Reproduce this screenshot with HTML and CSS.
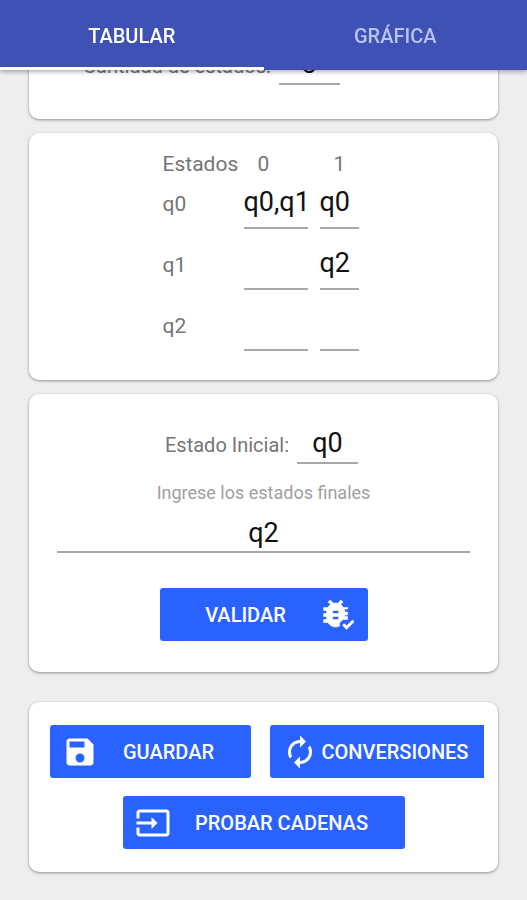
FILE: index.html
```html
<!DOCTYPE html>
<html lang="es">
<head>
    <meta charset="UTF-8">
    <meta name="viewport" content="width=device-width, initial-scale=1.0">
    <title>Tabular</title>
    <link rel="stylesheet" href="styles.css">
</head>
<body>

    <header class="tabs">
        <button type="button" class="tab active">TABULAR</button>
        <button type="button" class="tab">GRÁFICA</button>
    </header>

    <main>
        <section class="card card-count">
            <div class="field-row">
                <label for="cantidad">Cantidad de estados:</label>
                <input type="text" id="cantidad" class="field short" value="3">
            </div>
        </section>

        <section class="card card-table">
            <table class="states">
                <thead>
                    <tr>
                        <th class="col-name">Estados</th>
                        <th class="col-wide symbol">0</th>
                        <th class="col-narrow symbol">1</th>
                    </tr>
                </thead>
                <tbody>
                    <tr>
                        <td>q0</td>
                        <td><input type="text" class="field cell" aria-label="q0 con 0" value="q0,q1"></td>
                        <td><input type="text" class="field cell" aria-label="q0 con 1" value="q0"></td>
                    </tr>
                    <tr>
                        <td>q1</td>
                        <td><input type="text" class="field cell" aria-label="q1 con 0"></td>
                        <td><input type="text" class="field cell" aria-label="q1 con 1" value="q2"></td>
                    </tr>
                    <tr>
                        <td>q2</td>
                        <td><input type="text" class="field cell" aria-label="q2 con 0"></td>
                        <td><input type="text" class="field cell" aria-label="q2 con 1"></td>
                    </tr>
                </tbody>
            </table>
        </section>

        <section class="card card-final">
            <div class="field-row">
                <label for="inicial">Estado Inicial:</label>
                <input type="text" id="inicial" class="field short" value="q0">
            </div>
            <label for="finales" class="hint">Ingrese los estados finales</label>
            <input type="text" id="finales" class="field full" value="q2">
            <button type="button" class="btn btn-validate">
                <span>VALIDAR</span>
                <svg class="icon" viewBox="0 0 24 24">
                    <path class="bug" transform="translate(-1.6 -1)" d="M20 8h-2.81c-.45-.78-1.07-1.45-1.82-1.96L17 4.41 15.59 3l-2.17 2.17C12.96 5.06 12.49 5 12 5s-.96.06-1.41.17L8.41 3 7 4.41l1.62 1.63C7.88 6.55 7.26 7.22 6.81 8H4v2h2.09c-.05.33-.09.66-.09 1v1H4v2h2v1c0 .34.04.67.09 1H4v2h2.81c1.04 1.79 2.97 3 5.19 3 .9 0 1.8-.2 2.5-.6v-2l2.5-2.4h3v-2h-2v-1h2v-2h-2v-1c0-.34-.04-.67-.09-1H20V8zm-6 8h-4v-2h4v2zm0-4h-4v-2h4v2z"/>
                    <path class="check" d="M15.5 18.2l2.2 2.2 4.6-4.6"/>
                </svg>
            </button>
        </section>

        <section class="card card-actions">
            <div class="btn-row">
                <button type="button" class="btn btn-save">
                    <svg class="icon" viewBox="0 0 24 24">
                        <path d="M17 3H5c-1.11 0-2 .9-2 2v14c0 1.1.89 2 2 2h14c1.1 0 2-.9 2-2V7l-4-4zm-5 16c-1.66 0-3-1.34-3-3s1.34-3 3-3 3 1.34 3 3-1.34 3-3 3zm3-10H5V5h10v4z"/>
                    </svg>
                    <span>GUARDAR</span>
                </button>
                <button type="button" class="btn btn-convert">
                    <svg class="icon" viewBox="0 0 24 24">
                        <path d="M12 6v3l4-4-4-4v3c-4.42 0-8 3.58-8 8 0 1.57.46 3.03 1.24 4.26L6.7 14.8c-.45-.83-.7-1.79-.7-2.8 0-3.31 2.69-6 6-6zm6.76 1.74L17.3 9.2c.44.84.7 1.79.7 2.8 0 3.31-2.69 6-6 6v-3l-4 4 4 4v-3c4.42 0 8-3.58 8-8 0-1.57-.46-3.03-1.24-4.26z"/>
                    </svg>
                    <span>CONVERSIONES</span>
                </button>
            </div>
            <button type="button" class="btn btn-test">
                <svg class="icon" viewBox="0 0 24 24">
                    <path d="M21 3.01H3c-1.1 0-2 .9-2 2V9h2V4.99h18v14.03H3V15H1v4.01c0 1.1.9 1.98 2 1.98h18c1.1 0 2-.88 2-1.98v-14c0-1.11-.9-2-2-2zM11 16l4-4-4-4v3H1v2h10v3z"/>
                </svg>
                <span>PROBAR CADENAS</span>
            </button>
        </section>
    </main>

</body>
</html>
```

FILE: styles.css
```css
* {
    box-sizing: border-box;
}

body {
    margin: 0;
    background-color: #eeeeee;
    color: #757575;
    font-family: Roboto, sans-serif;
    font-size: 20px;
}

button, input {
    font-family: inherit;
    border: none;
}

.tabs {
    position: fixed;
    top: 0;
    left: 0;
    right: 0;
    z-index: 1;
    display: flex;
    height: 70px;
    background-color: #3f51b5;
    box-shadow: 0 2px 4px rgba(0, 0, 0, 0.3);
}

.tab {
    flex: 1;
    padding: 4px 0 0;
    background: none;
    border-bottom: 3px solid transparent;
    color: #b9c3f0;
    font-size: 20px;
    font-weight: 500;
}

.tab.active {
    color: white;
    border-bottom-color: white;
}

main {
    display: flex;
    flex-direction: column;
    gap: 14px;
    padding: 20px 29px 28px;
}

.card {
    display: flex;
    flex-direction: column;
    align-items: center;
    background-color: white;
    border-radius: 10px;
    box-shadow: 0 1px 3px rgba(0, 0, 0, 0.4);
}

.card-count {
    align-items: flex-start;
    padding: 27px 54px 34px;
}

.card-table {
    padding: 17px 0 19px;
}

.card-final {
    padding: 32px 28px 31px;
}

.card-actions {
    margin-top: 16px;
    padding: 23px 0;
    gap: 18px;
}

.field-row {
    display: flex;
    align-items: baseline;
    gap: 8px;
    padding-right: 4px;
}

.field {
    padding: 0;
    background: none;
    border-bottom: 2px solid #a8a8a8;
    border-radius: 0;
    color: #111111;
    font-size: 27px;
    line-height: 32px;
    text-align: center;
}

.short {
    width: 61px;
    height: 38px;
    padding-bottom: 2px;
}

.full {
    width: 100%;
    height: 49px;
    padding-top: 10px;
}

.hint {
    margin-top: 18px;
    color: #a0a0a0;
    font-size: 18px;
    line-height: 22px;
}

.states {
    border-collapse: collapse;
    table-layout: fixed;
    width: 202px;
    font-size: 21px;
}

.states th, .states td {
    padding: 0;
    font-weight: 400;
    text-align: left;
    vertical-align: baseline;
}

.states th {
    height: 28px;
    line-height: 28px;
}

.states tbody tr {
    height: 61px;
}

.col-name {
    width: 75px;
}

.col-wide {
    width: 76px;
}

.states .symbol {
    padding-left: 20px;
}

.cell {
    display: block;
    width: calc(100% - 12px);
    height: 51px;
    margin: 0 6px;
    padding-bottom: 2px;
    text-align: left;
}

.btn {
    display: flex;
    align-items: center;
    height: 53px;
    padding: 0 12px;
    background-color: #2962ff;
    border-radius: 3px;
    color: white;
    font-size: 20px;
    font-weight: 500;
    cursor: pointer;
}

.btn span {
    flex: 1;
    text-align: center;
}

.icon {
    flex: none;
    width: 36px;
    height: 36px;
    fill: white;
}

.bug {
    stroke: white;
    stroke-width: 0.4;
}

.check {
    fill: none;
    stroke: white;
    stroke-width: 2;
}

.btn-validate {
    width: 208px;
    margin-top: 35px;
}

.btn-row {
    display: flex;
    gap: 19px;
    width: 100%;
    padding: 0 14px 0 21px;
}

.btn-save {
    width: 201px;
}

.btn-convert {
    flex: 1;
    border-radius: 3px 0 0 3px;
}

.btn-test {
    width: 282px;
}
```
